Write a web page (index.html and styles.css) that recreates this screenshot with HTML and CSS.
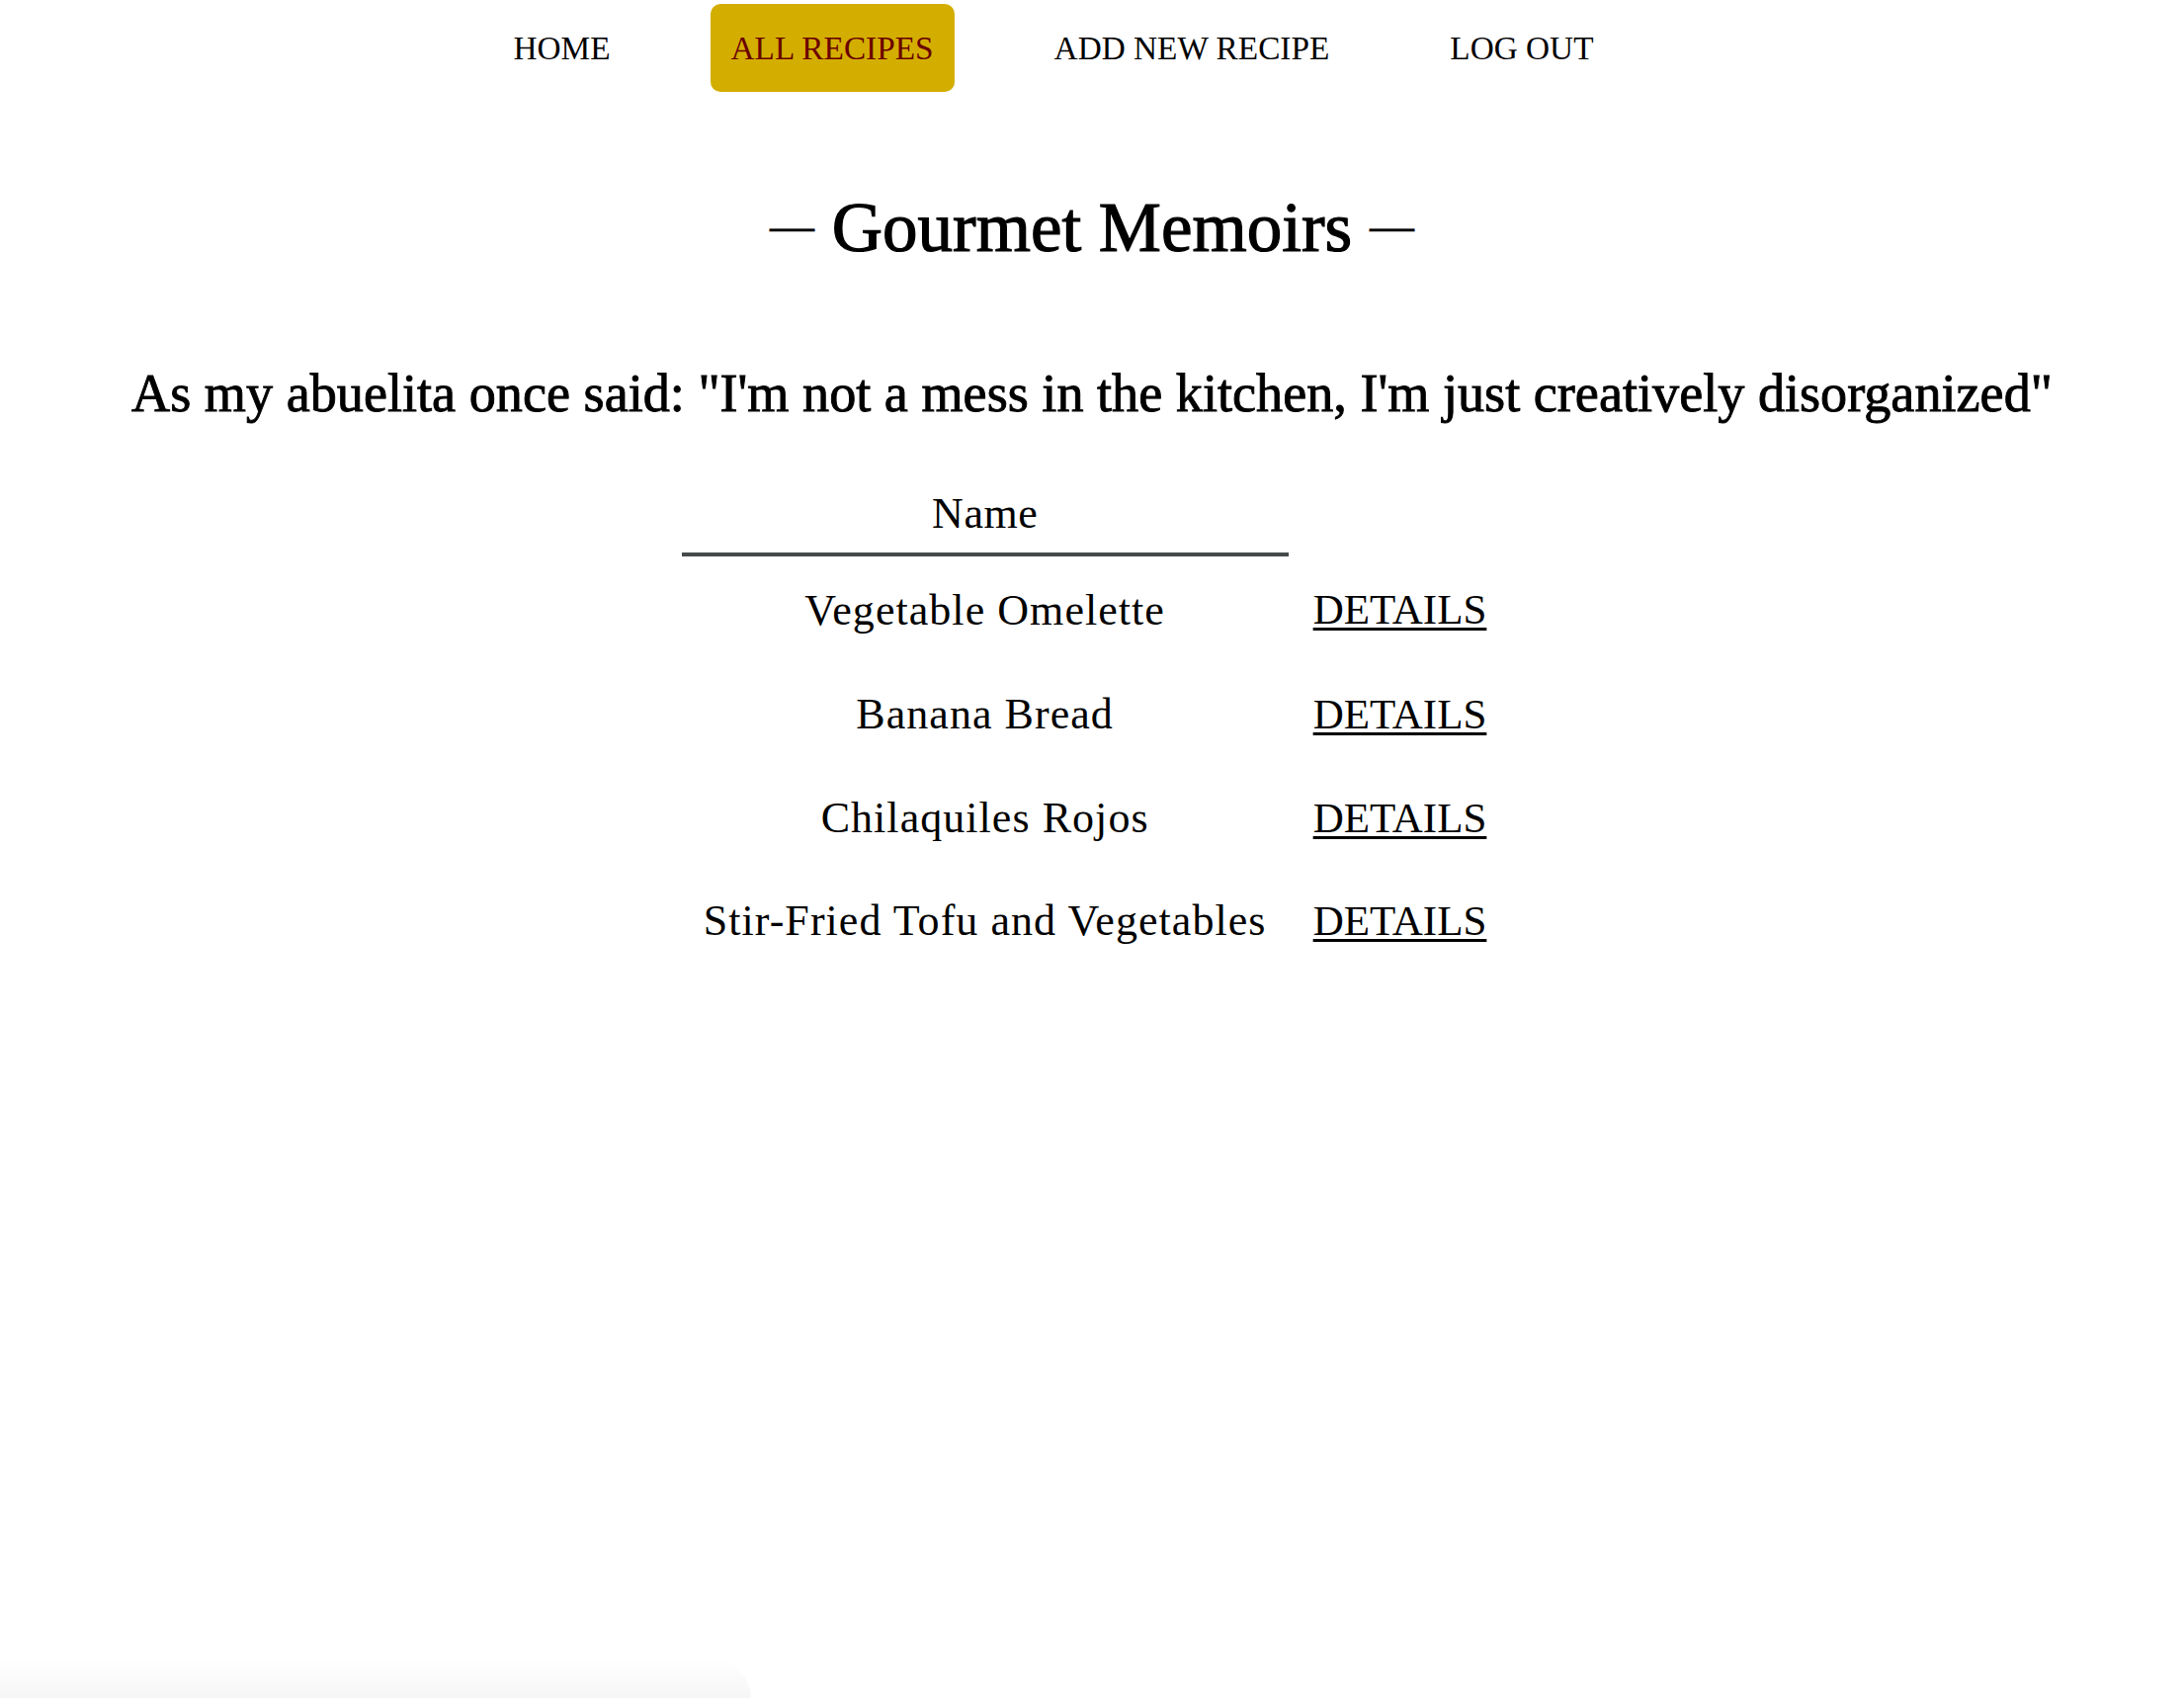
FILE: index.html
```html
<!DOCTYPE html>
<html lang="en">
<head>
<meta charset="utf-8">
<title>Gourmet Memoirs - All Recipes</title>
<link rel="stylesheet" href="styles.css">
</head>
<body>
<nav class="topnav">
  <ul class="nav-list">
    <li><a class="nav-link" href="#">HOME</a></li>
    <li><a class="nav-link nav-link--active" href="#">ALL RECIPES</a></li>
    <li><a class="nav-link" href="#">ADD NEW RECIPE</a></li>
    <li><a class="nav-link" href="#">LOG OUT</a></li>
  </ul>
</nav>
<main class="content">
  <h1 class="site-title"><span class="title-dash">—</span> Gourmet Memoirs <span class="title-dash">—</span></h1>
  <h2 class="quote">As my abuelita once said: "I'm not a mess in the kitchen, I'm just creatively disorganized"</h2>
  <table class="recipes">
    <thead>
      <tr><th class="col-name">Name</th><th class="col-action"></th></tr>
    </thead>
    <tbody>
      <tr><td class="cell-name">Vegetable Omelette</td><td class="cell-action"><a class="details-link" href="#">DETAILS</a></td></tr>
      <tr><td class="cell-name">Banana Bread</td><td class="cell-action"><a class="details-link" href="#">DETAILS</a></td></tr>
      <tr><td class="cell-name">Chilaquiles Rojos</td><td class="cell-action"><a class="details-link" href="#">DETAILS</a></td></tr>
      <tr><td class="cell-name">Stir-Fried Tofu and Vegetables</td><td class="cell-action"><a class="details-link" href="#">DETAILS</a></td></tr>
    </tbody>
  </table>
</main>
<div class="bottom-shade"></div>
</body>
</html>
```
FILE: styles.css
```css
html, body {
  margin: 0;
  padding: 0;
  background: #ffffff;
  color: #000000;
  font-family: "Liberation Serif", "Times New Roman", serif;
}

.topnav {
  padding-top: 4px;
}

.nav-list {
  list-style: none;
  margin: 0;
  padding: 0 78px 0 0;
  display: flex;
  justify-content: center;
  gap: 80px;
}

.nav-link {
  display: flex;
  align-items: center;
  height: 89px;
  padding: 0 21px;
  font-size: 33.3px;
  line-height: 1.2;
  color: #000000;
  text-decoration: none;
  border-radius: 10px;
}

.nav-link--active {
  background: #d3ae00;
  color: #6b0000;
}

.content {
  display: flex;
  flex-direction: column;
  align-items: center;
}

.site-title {
  margin: 95px 0 0;
  font-size: 71px;
  line-height: 1.2;
  font-weight: 400;
  -webkit-text-stroke: 1.2px #000;
  text-align: center;
}

.title-dash {
  font-size: 45px;
  vertical-align: 11px;
  -webkit-text-stroke: 0.4px #000;
}

.quote {
  margin: 93px 0 0;
  font-size: 54.2px;
  line-height: 1.2;
  font-weight: 400;
  -webkit-text-stroke: 0.9px #000;
  text-align: center;
}

.recipes {
  margin-top: 63px;
  border-collapse: collapse;
  font-size: 44px;
  line-height: 1.2;
}

.col-name {
  width: 614px;
  box-sizing: border-box;
  padding: 0 20px 12px;
  font-weight: 400;
  letter-spacing: 0.5px;
  text-align: center;
  border-bottom: 4px solid #454a4b;
}

.col-action {
  width: 216px;
  box-sizing: border-box;
  padding: 0;
}

.cell-name {
  padding: 29px 20px 23px;
  text-align: center;
  letter-spacing: 1.05px;
  white-space: nowrap;
}

.cell-action {
  padding: 29px 16px 23px 25px;
  text-align: left;
}

.details-link {
  color: #000000;
  font-size: 43px;
  text-decoration: underline;
  text-decoration-thickness: 3px;
  text-underline-offset: 4px;
}

.bottom-shade {
  position: fixed;
  left: 0;
  bottom: 0;
  width: 760px;
  height: 40px;
  border-top-right-radius: 60px;
  background: linear-gradient(to bottom, rgba(0, 0, 0, 0), rgba(0, 0, 0, 0.035));
  pointer-events: none;
}
```
